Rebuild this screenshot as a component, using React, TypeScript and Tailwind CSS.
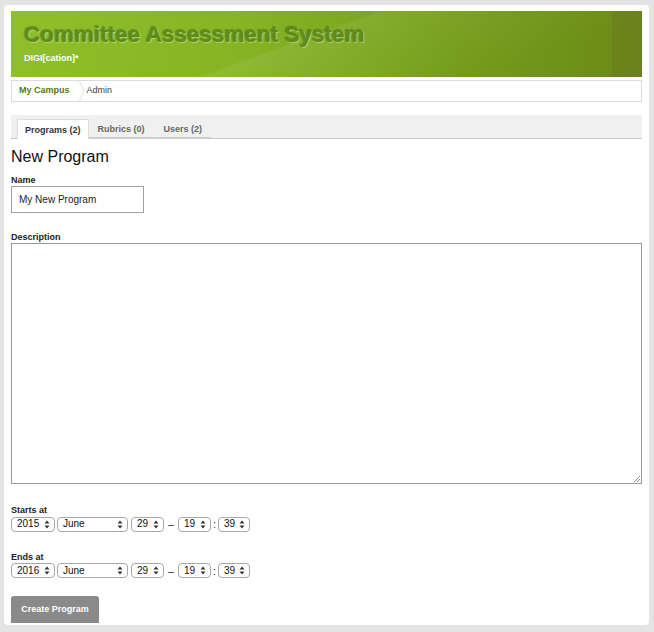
import React from 'react';

const Arrows: React.FC = () => (
    <svg width="6" height="9" viewBox="0 0 6 9" className="shrink-0">
        <path d="M3 0.5 L5.5 3.5 H0.5 Z" fill="#333" />
        <path d="M3 8.5 L5.5 5.5 H0.5 Z" fill="#333" />
    </svg>
);

const FakeSelect: React.FC<{ value: string; width: string }> = ({ value, width }) => (
    <div className={`${width} h-[15px] flex items-center justify-between pl-[5px] pr-[4px] border border-[#a8a8a8] rounded-[4px] bg-white text-[10px] leading-none text-[#111]`}>
        <span>{value}</span>
        <Arrows />
    </div>
);

const DateRow: React.FC<{ label: string; year: string }> = ({ label, year }) => (
    <div className="flex flex-col">
        <label className="text-[9px] font-bold text-[#222] leading-[10px] mb-[1px]">{label}</label>
        <div className="flex items-center">
            <FakeSelect value={year} width="w-[44px]" />
            <div className="w-[2px]" />
            <FakeSelect value="June" width="w-[71px]" />
            <div className="w-[3px]" />
            <FakeSelect value="29" width="w-[33px]" />
            <span className="w-[14px] text-center text-[11px] text-[#333]">–</span>
            <FakeSelect value="19" width="w-[33px]" />
            <span className="w-[7px] text-center text-[11px] text-[#333]">:</span>
            <FakeSelect value="39" width="w-[32px]" />
        </div>
    </div>
);

export default function App() {
    return (
        <div className="w-[654px] h-[632px] bg-[#e4e4e4] pl-[4px] pt-[5px] pr-[5px] pb-[7px]" style={{ fontFamily: '"Liberation Sans", Arial, sans-serif' }}>
            <div className="w-full h-full bg-white rounded-[4px] px-[7px] pt-[6px] flex flex-col overflow-hidden [&>*]:shrink-0">
                {/* banner */}
                <div className="relative h-[66px] overflow-hidden bg-[linear-gradient(100deg,#8fbf2a_0%,#86b524_35%,#759c1a_70%,#6a8a17_100%)] pl-[13px] pt-[11px]">
                    <div className="absolute inset-0 bg-[linear-gradient(160deg,rgba(255,255,255,0)_45%,rgba(255,255,255,0.07)_46%,rgba(255,255,255,0)_80%)]" />
                    <div className="absolute right-0 top-0 bottom-0 w-[30px] bg-[#6b7d1e]/60" />
                    <div className="relative text-[22.5px] font-bold leading-[26px] text-[#5e8d17] [text-shadow:1px_1px_1px_rgba(255,255,255,0.35),-1px_-1px_1px_rgba(0,0,0,0.25)]">
                        Committee Assessment System
                    </div>
                    <div className="relative mt-[5px] text-[9px] font-bold text-white leading-[11px]">DIGI[cation]*</div>
                </div>
                {/* breadcrumb */}
                <div className="mt-[3px] h-[22px] border border-[#dcdcdc] flex items-center text-[9px]">
                    <div className="relative h-full flex items-center pl-[7px] pr-[10px] font-bold text-[#4f7d10]">
                        My Campus
                        <svg className="absolute right-[-5px] top-[-1px]" width="6" height="22" viewBox="0 0 6 22">
                            <path d="M0 0 L5 11 L0 22" fill="white" stroke="#e2e2e2" strokeWidth="1" />
                        </svg>
                    </div>
                    <div className="pl-[7px] text-[#444]">Admin</div>
                </div>
                {/* tabs */}
                <div className="mt-[13px] h-[24px] bg-[#f0f0f0] border-b border-[#c8c8c8] flex items-end pl-[6px] text-[9px] font-bold">
                    <div className="h-[20px] px-[7px] bg-white border border-b-0 border-[#dcdcdc] flex items-center pt-[2px] text-[#333] -mb-px">Programs (2)</div>
                    <div className="h-[20px] px-[9px] border-b-2 border-[#cfcfcf] flex items-center pt-[3px] text-[#666] -mb-px">Rubrics (0)</div>
                    <div className="h-[20px] px-[9px] border-b-2 border-[#cfcfcf] flex items-center pt-[3px] text-[#666] ml-[1px] -mb-px">Users (2)</div>
                </div>
                {/* form */}
                <h1 className="mt-[8px] text-[16px] leading-[20px] text-[#111]">New Program</h1>
                <label className="mt-[8px] text-[9px] font-bold leading-[10px] text-[#222]">Name</label>
                <div className="mt-[1px] w-[133px] h-[27px] border border-[#a0a0a0] flex items-center pl-[7px] text-[10px] text-[#222]">
                    My New Program
                </div>
                <label className="mt-[19px] text-[9px] font-bold leading-[10px] text-[#222]">Description</label>
                <div className="relative mt-[1px] h-[241px] border border-[#999]">
                    <svg className="absolute right-[1px] bottom-[1px]" width="7" height="7" viewBox="0 0 7 7">
                        <path d="M7 1 L1 7 M7 4 L4 7" stroke="#777" strokeWidth="0.8" />
                    </svg>
                </div>
                <div className="mt-[21px]">
                    <DateRow label="Starts at" year="2015" />
                </div>
                <div className="mt-[19px]">
                    <DateRow label="Ends at" year="2016" />
                </div>
                <button className="mt-[17px] w-[88px] h-[27px] bg-[#8a8a8a] rounded-t-[3px] text-white text-[9px] font-bold flex items-center justify-center">
                    Create Program
                </button>
            </div>
        </div>
    );
}
